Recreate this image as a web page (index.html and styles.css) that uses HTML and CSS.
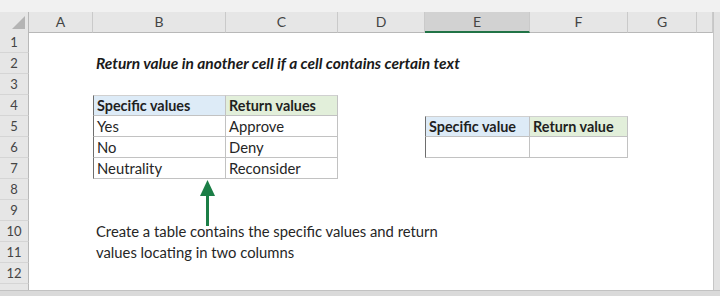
FILE: index.html
```html
<!DOCTYPE html>
<html lang="en">

<head>
    <meta charset="UTF-8">
    <title>Return value in another cell</title>
    <link rel="stylesheet" href="styles.css">
</head>

<body>
    <div class="window">
        <div class="topstrip"></div>
        <div class="main">
            <div class="sheet">
                <!-- column headers -->
                <div class="row colhead">
                    <div class="corner">
                        <svg width="14" height="13" viewBox="0 0 14 13"><polygon points="13,0 13,13 0,13" fill="#b4b4b4" /></svg>
                    </div>
                    <div>A</div>
                    <div>B</div>
                    <div>C</div>
                    <div>D</div>
                    <div class="selected">E</div>
                    <div>F</div>
                    <div>G</div>
                    <div></div>
                </div>

                <div class="row"><div class="rh">1</div></div>
                <div class="row">
                    <div class="rh">2</div>
                    <div class="cell b title">Return value in another cell if a cell contains certain text</div>
                </div>
                <div class="row"><div class="rh">3</div></div>
                <div class="row">
                    <div class="rh">4</div>
                    <div class="cell b tcell first top th blue">Specific values</div>
                    <div class="cell c tcell top th green">Return values</div>
                </div>
                <div class="row">
                    <div class="rh">5</div>
                    <div class="cell b tcell first">Yes</div>
                    <div class="cell c tcell">Approve</div>
                    <div class="cell e tcell first top th blue">Specific value</div>
                    <div class="cell f tcell top th green">Return value</div>
                </div>
                <div class="row">
                    <div class="rh">6</div>
                    <div class="cell b tcell first">No</div>
                    <div class="cell c tcell">Deny</div>
                    <div class="cell e tcell first"></div>
                    <div class="cell f tcell"></div>
                </div>
                <div class="row">
                    <div class="rh">7</div>
                    <div class="cell b tcell first">Neutrality</div>
                    <div class="cell c tcell">Reconsider</div>
                </div>
                <div class="row"><div class="rh">8</div></div>
                <div class="row"><div class="rh">9</div></div>
                <div class="row">
                    <div class="rh">10</div>
                    <div class="cell b">Create a table contains the specific values and return</div>
                </div>
                <div class="row">
                    <div class="rh">11</div>
                    <div class="cell b">values locating in two columns</div>
                </div>
                <div class="row"><div class="rh">12</div></div>
                <div class="row"><div class="rh"></div></div>

                <!-- arrow pointing at the table -->
                <svg class="arrow" width="17" height="46" viewBox="0 0 17 46">
                    <polygon points="8.5,0 16,16 1,16" fill="#1b7e46" />
                    <rect x="7" y="15" width="3" height="31" fill="#1b7e46" />
                </svg>
            </div>
            <div class="vbar"></div>
        </div>
        <div class="hbar"></div>
    </div>
</body>

</html>
```
FILE: styles.css
```css
body {
    margin: 0;
    font-family: Lato, "Open Sans", sans-serif;
}

.window {
    width: 720px;
    height: 296px;
    display: flex;
    flex-direction: column;
    background-color: #f1f1f1;
    overflow: hidden;
}

.topstrip {
    height: 12px;
    flex: none;
}

.main {
    flex: 1;
    display: flex;
    min-height: 0;
}

.sheet {
    position: relative;
    width: 713px;
    overflow: hidden;
    background-color: #fff;
}

.vbar {
    flex: 1;
    background-color: #e2e2e2;
    border-left: 1px solid #c6c6c6;
}

.hbar {
    height: 5px;
    flex: none;
    background-color: #dadada;
    border-top: 1px solid #c2c2c2;
}

/* grid rows */
.row {
    display: grid;
    grid-template-columns: 29px 64px 133px 112px 87px 105px 98px 69px 16px;
    height: 21px;
}

.colhead {
    height: 20px;
    background-color: #e6e6e6;
}

.colhead div {
    box-sizing: border-box;
    border-right: 1px solid #cacaca;
    border-bottom: 1px solid #b8b8b8;
    text-align: center;
    line-height: 19px;
    font-size: 14px;
    color: #444;
}

.colhead .corner {
    display: flex;
    align-items: flex-end;
    justify-content: flex-end;
    padding: 0 2px 3px 0;
    border-right-color: #b8b8b8;
}

.colhead .corner svg {
    display: block;
}

.colhead .selected {
    background-color: #d2d2d2;
    border-bottom: 2px solid #217346;
}

.rh {
    box-sizing: border-box;
    grid-column: 1;
    background-color: #e6e6e6;
    border-right: 1px solid #b8b8b8;
    border-bottom: 1px solid #d5d5d5;
    text-align: center;
    line-height: 20px;
    font-size: 13px;
    color: #444;
}

/* cells */
.cell {
    box-sizing: border-box;
    padding-left: 3px;
    line-height: 20px;
    font-size: 14.8px;
    color: #262626;
    white-space: nowrap;
}

.b { grid-column: 3; }
.c { grid-column: 4; }
.e { grid-column: 6; }
.f { grid-column: 7; }

.title {
    font-size: 15.5px;
    font-weight: bold;
    font-style: italic;
    color: #1a1a1a;
}

.tcell {
    border-right: 1px solid #c2c2c2;
    border-bottom: 1px solid #c2c2c2;
}

.tcell.first {
    border-left: 1px solid #6e6e6e;
}

.tcell.top {
    border-top: 1px solid #d0d0d0;
    line-height: 19px;
}

.th {
    font-size: 14.4px;
    font-weight: bold;
    color: #1f1f1f;
}

.blue {
    background-color: #ddebf7;
}

.green {
    background-color: #e2efda;
}

.arrow {
    position: absolute;
    left: 199px;
    top: 168px;
}
```
